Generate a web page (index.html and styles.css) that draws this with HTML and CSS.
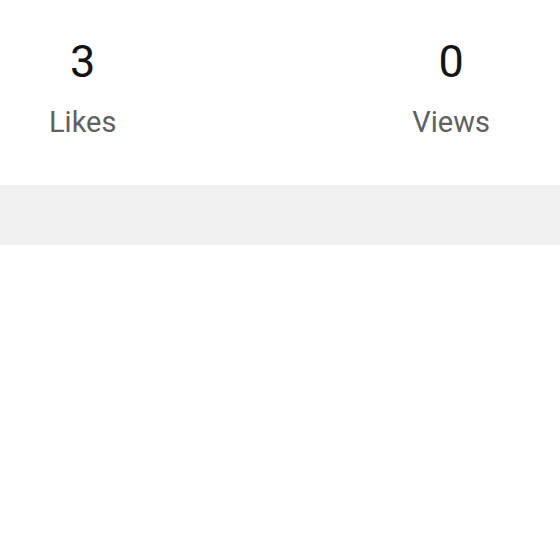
FILE: index.html
```html
<!DOCTYPE html>
<html>
<head>
<meta charset="utf-8">
<link rel="stylesheet" href="styles.css">
</head>
<body>
<div class="stats">
  <div class="stat">
    <div class="stat-value">3</div>
    <div class="stat-label">Likes</div>
  </div>
  <div class="stat">
    <div class="stat-value">0</div>
    <div class="stat-label">Views</div>
  </div>
</div>
<div class="divider-band"></div>
</body>
</html>
```

FILE: styles.css
```css
html, body {
  margin: 0;
  padding: 0;
  background: #ffffff;
  font-family: Roboto, "Noto Sans", sans-serif;
}

.stats {
  display: flex;
  justify-content: space-between;
  padding: 36px 70px 0 49px;
}

.stat {
  display: flex;
  flex-direction: column;
  align-items: center;
}

.stat-value {
  font-size: 45px;
  line-height: 52px;
  color: #141414;
}

.stat-label {
  margin-top: 17px;
  font-size: 29px;
  line-height: 34px;
  color: #616161;
}

.divider-band {
  margin-top: 46px;
  height: 60px;
  background: #f1f1f1;
}
```
